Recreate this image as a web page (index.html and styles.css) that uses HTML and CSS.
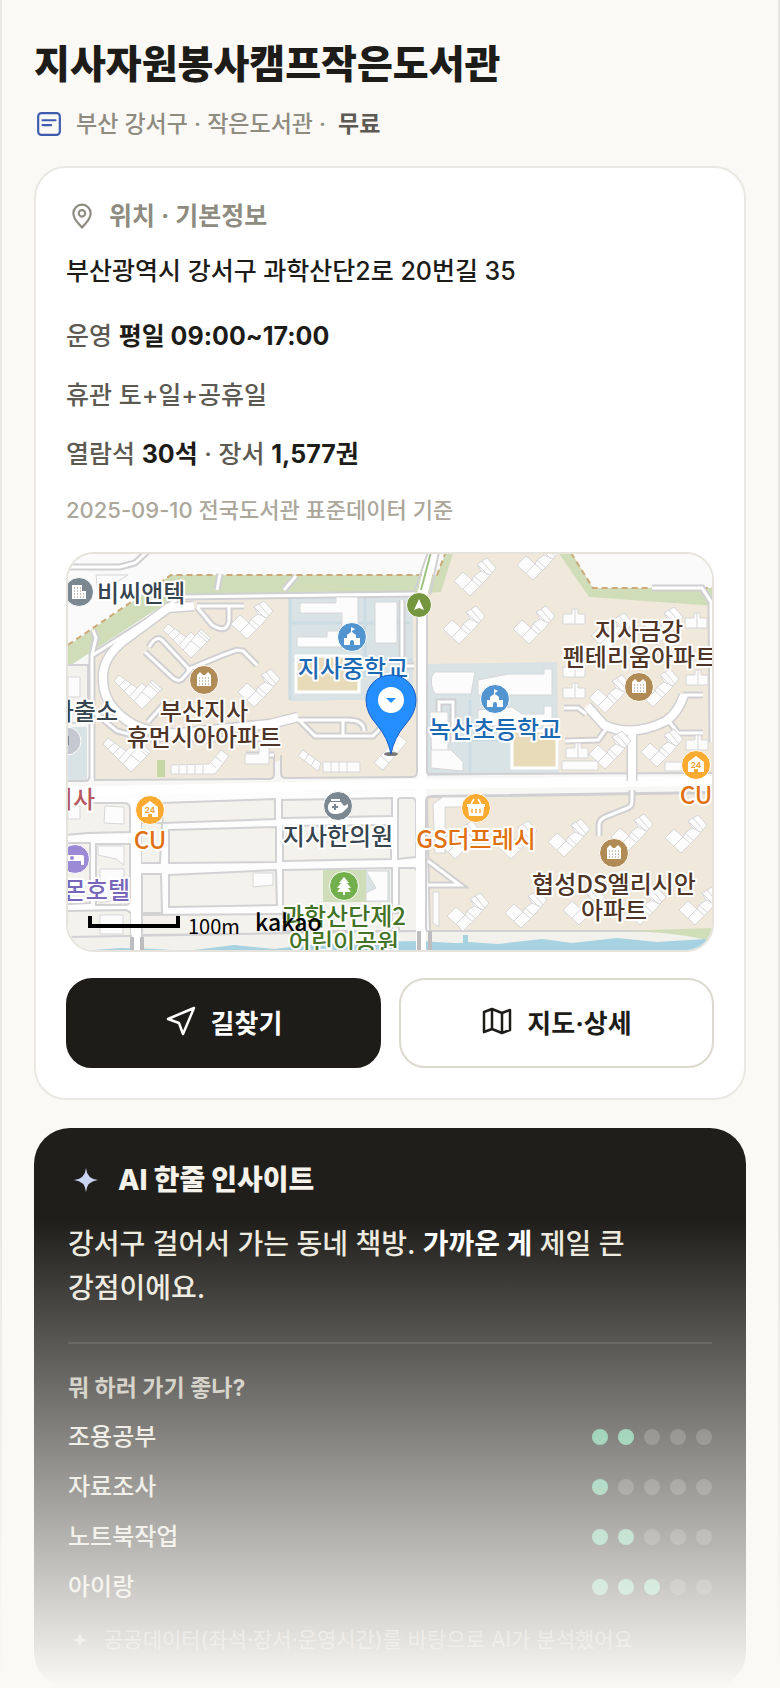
FILE: index.html
```html
<!DOCTYPE html>
<html lang="ko">
<head>
  <meta charset="UTF-8">
  <meta name="viewport" content="width=device-width, initial-scale=1.0">
  <title>지사자원봉사캠프작은도서관</title>
  <link rel="stylesheet" href="styles.css">
</head>
<body>
  <main class="page">
    <header class="place-header">
      <h1>지사자원봉사캠프작은도서관</h1>
      <p class="place-meta">
        <svg class="icon-type" viewBox="0 0 24 24" aria-hidden="true">
          <rect x="2" y="2" width="20" height="20" rx="3"/>
          <path d="M6 8.500h12M6 13h8"/>
        </svg>
        <span>부산 강서구 · 작은도서관 ·</span>
        <strong>무료</strong>
      </p>
    </header>

    <!-- 위치 · 기본정보 -->
    <section class="info-card">
      <h2 class="info-title">
        <svg class="icon-pin" viewBox="0 0 24 24" aria-hidden="true">
          <path d="M12 22.500C9 19.500 4 15 4 9.500a8 8 0 0 1 16 0c0 5.500-5 10-8 13z"/>
          <circle cx="12" cy="9.500" r="3"/>
        </svg>
        위치 · 기본정보
      </h2>
      <p class="address">부산광역시 강서구 과학산단2로 20번길 35</p>
      <div class="facts">
        <p>운영 <strong>평일 09:00~17:00</strong></p>
        <p>휴관 토+일+공휴일</p>
        <p>열람석 <strong>30석</strong> · 장서 <strong>1,577권</strong></p>
      </div>
      <p class="source">2025-09-10 전국도서관 표준데이터 기준</p>

      <div class="map">
        <svg viewBox="68 554 644 396" role="img" aria-label="지도">
          <defs>
            <g id="tower">
              <path d="M-12-5L-21 4-5 19 11 3 21-9 12-19 2-13 6-6-1-1-3 3z"/>
              <path d="M-12 12l9-9 8 7M-1-1l9 8M6-6l9 4M2-13l11 11M7-16l10 12"/>
            </g>
            <g id="row">
              <path d="M-19-17L-24-11 4 17 24-3 14-12 8-5 4-9-1-4z"/>
              <path d="M-13-12l-6 6M-7-8l-7 7M-1-4l-8 9M8-5L-4 9M10-8l10 9M4 0l10 8M12-10l10 9"/>
            </g>
            <g id="twin"><path d="M-11-4h9v-5h6v5h7v10h-22zM1-9V6"/></g>
            <g id="apartment">
              <circle r="14.500" class="badge brown"/>
              <path class="glyph" d="M-7 6V-5l3-3 3 3h2l3-3 3 3V6z"/>
              <path class="windows" d="M-5-2h11M-5 1h11M-5 4h11"/>
            </g>
            <g id="school">
              <circle r="14.500" class="badge blue"/>
              <path class="glyph" d="M-8 8V1h3v-3l4-3v-5l4 2-3 2v1l4 3v3h4v7H2V5a2 2 0 0 0-4 0v3z"/>
            </g>
            <g id="cu">
              <circle r="14.500" class="badge orange"/>
              <path class="glyph" d="M-8 7V-3l8-6 8 6V7H2V4h-4v3z"/>
              <text class="store-no" y="3">24</text>
            </g>
            <path id="lanes" d="M68 567h52l15-4 13-12M93 630l3 8-4 17v124M93 655l57-36 30-22 235-3M170 592v-10M217 590l3-16M284 590l12-14M197 606h47M197 607l15 18q15 9 17-4v-15M145 652l28 26q6 5 10 0l7-8-28-30q-6-5-13 7M187 670l36-15 14-5 6 1 14 14M148 722l16-18M95 713l22 18 30 8h133M298 720h50q16 0 16 11M298 719l17 17h58l8-8M343 720v16M402 600v66h12M439 720v-18h14v40M564 708h14l8 6M565 741l33-1 9-12M683 695h20M668 720l10 13h25M652 588h50l9 14 1 140M632 790v12q0 5-7 7l-20 8q-6 3-6 8v11M428 861l32 24h-32M246 755h28"/>
            <path id="roads" d="M194 606l-26 2-38 28q-26 18-27 39t12 35q22 25 65 23l90-9 28-7M587 706l17 19q28 13 62-4 12-8 18-26M632 731v50"/>
          </defs>

          <rect class="ground" x="68" y="554" width="644" height="396"/>
          <path class="empty" d="M68 554h377l-8 23H171L68 645zM571 554h141v34H593z"/>
          <path class="green" d="M68 646l103-71h266l9-23h8l-13 42H180l-112 73z"/>
          <path class="border-line" d="M68 645l103-70h266l8-21"/>

          <!-- 단지 -->
          <path class="estate" d="M94 779V654l88-60h234v180q0 3-3 3H286q-5 0-5-5V760l-8 3v12q0 3-4 3z"/>
          <path class="estate" d="M426 663v-70l15-1 13-42h104l31 47 125 8v168l-290 1z"/>
          <path class="green" d="M558 552l31 45 125 9v-18H593l-22-36z"/>
          <path class="border-line" d="M571 553l22 35h120"/>
          <path class="estate edged" d="M427 800q0-3 3-3l284-4v138l-284 1z"/>
          <path class="school" d="M289 592h124v107l-122 2zM427 664l130-2 2 112-132 2z"/>
          <path class="school-line" d="M290 623h120M290 596v104M365 597v80M293 660h120M470 700v72M430 740h80"/>
          <path class="field" d="M296 656h63v36h-63zM512 731h45v37h-45z"/>
          <path class="park" d="M157 760h8v17h-8z"/>
          <path class="school" d="M66 727h21v53H66z"/>

          <!-- 남쪽 블록 -->
          <path class="avenue" d="M66 792l350-8 300-3"/>
          <path class="south" d="M66 797l360-8v142l-360 7z"/>
          <path class="block" d="M66 665h22v58H66zM66 803h58q6 0 6 6v23l-42 1-22 2zM160 803l115-4v20l-112 4zM141 823h21l-2 40h-19zM169 830l107-3v35l-107 1zM169 875l107-5 1 35-108 2zM142 874h19l1 39h-20zM66 843h24v60l-24 1zM96 844h34v56q0 5-5 5H96zM66 911l60-1q5 2 5 5v22l-65 3zM142 915l276-2v19l-276 3z"/>
          <path class="block" d="M282 800l110-2v18l-110 2zM283 826l108-1v34l-108 2zM283 870l109-2v63H283zM398 800q0-2 4-2h10q4 0 4 6v53l-18 2zM399 868h14q4 0 4 4v59h-18z"/>
          <path class="green" d="M323 870h43v32h-43z"/>
          <path class="school" d="M366 870h24v32h-24z"/>

          <!-- 하천 -->
          <path class="riverside" d="M66 937l352-6h296v21H66z"/>
          <path class="green" d="M620 931l94-3v13q-45-10-94-10z"/>
          <path class="water" d="M66 952l55-4 35 1 30 2 48-6 40 4 50-6 94-2 36 2h9v-8h5v7l30 2 44-5 30 4 45-5 40 4 48-3 18 8 9 4z"/>

          <!-- 도로 -->
          <path class="avenue" d="M421 594v360M136 800v154"/>
          <path class="avenue" d="M421 600l12-50"/>
          <path class="road-edge" d="M94 780l176-1q4-1 4-5v-20M281 755v18q0 5 5 5l126-1q5 0 5-5V594M427 600v170q0 5 5 4l280-1M426 930v-129q0-5 6-5l281-4M415 590l13-38M430 595l9-43M131 935v17M142 935v17M66 781h20q3 0 3-4"/>
          <path class="road-bold" d="M419 931v21M430 931v21M132 937v15M142 937v15"/>
          <path class="bus-line" d="M421 590l10-38"/>
          <use href="#lanes" class="lane-edge"/>
          <use href="#roads" class="wide-edge"/>
          <use href="#lanes" class="lane"/>
          <use href="#roads" class="wide"/>

          <!-- 건물 -->
          <g class="building">
            <use href="#row" x="187" y="641"/><use href="#row" x="138" y="692"/><use href="#row" x="127" y="755"/>
            <use href="#tower" x="252" y="620"/><use href="#tower" x="259" y="688"/>
            <use href="#tower" x="475" y="577"/><use href="#tower" x="464" y="625"/>
            <use href="#tower" x="538" y="561"/><use href="#tower" x="534" y="625"/>
            <use href="#tower" x="610" y="694"/><use href="#tower" x="658" y="688"/>
            <use href="#tower" x="610" y="750"/><use href="#tower" x="662" y="748"/>
            <use href="#tower" x="569" y="838"/><use href="#tower" x="632" y="833"/><use href="#tower" x="686" y="834"/>
            <use href="#tower" x="460" y="840"/><use href="#tower" x="516" y="840"/>
            <use href="#tower" x="468" y="912"/><use href="#tower" x="526" y="909"/>
            <use href="#tower" x="584" y="906"/><use href="#tower" x="645" y="906"/><use href="#tower" x="700" y="906"/>
            <use href="#tower" x="612" y="632"/><use href="#tower" x="662" y="626"/>
            <use href="#twin" x="574" y="618"/><use href="#twin" x="696" y="622"/>
            <use href="#twin" x="574" y="692"/><use href="#twin" x="697" y="679"/>
            <use href="#twin" x="577" y="752"/><use href="#twin" x="697" y="744"/>
            <use href="#twin" x="574" y="671"/>
            <path d="M300 603h36v-6h22v40h-16v-24h-42zM297 637h30v-6h22v16h-52zM375 602h22v41h-22zM432 676l3-4h40l-4 22h-36q-5-8-3-18zM430 712h18v50h-16zM96 575h32l-30 18zM68 677h12v20H68zM478 680l30-6h36v-5h8v26h-74zM478 710l34-3 10 7h22v-8h8v20h-74z"/>
            <path d="M562 761h36v9h-36zM665 762h34v9h-34zM431 750h20l12 12v9l-32-3z"/>
            <path d="M171 765l38-1 12-14 8 6-14 18h-44zM179 765v10M187 765v10M195 765v10M203 765v10M211 763l5 5M216 757l6 5M298 756l5-6 18 13-3 8zM304 761l5-7M311 766l4-7M323 762h37v10h-37zM331 762v10M339 762v10M347 762v10M374 763l25-28 8 7-24 28zM381 756l8 7M389 747l8 7"/>
            <path d="M105 806l19 1v17l-20-1zM68 806h12v13H68zM98 846h26v19l-8-6-18-4zM100 869h24v36l-10-5-14 3zM253 873h20v12l-20 2zM100 915h23v19h-23zM366 871h22v30h-22v-8l10-5zM433 804l10-7h28v10h-26v46h-10zM433 892h6v35l-6-4zM245 754h14v-8h10v18h-24z"/>
          </g>

          <g class="badges">
            <g transform="translate(79 592)">
              <circle r="14.500" class="badge slate"/>
              <path class="glyph" d="M-7 7V-7H3v6h4v8z"/>
              <path class="windows" d="M-5-4h8M-5-1h8M-5 2h11M-5 5h11"/>
            </g>
            <use href="#apartment" x="204" y="680"/>
            <use href="#apartment" x="639" y="687"/>
            <use href="#apartment" x="614" y="853"/>
            <use href="#school" x="352" y="637"/>
            <use href="#school" x="495" y="699"/>
            <use href="#cu" x="150" y="810"/>
            <use href="#cu" x="696" y="765"/>
            <g transform="translate(419 605)">
              <circle r="12.500" class="badge olive"/>
              <path class="glyph" d="M0-6l5 11-5-2-5 2z"/>
            </g>
            <circle cx="67" cy="741" r="14" class="badge pale"/>
            <path d="M67 736h2v9h-2z" fill="#7b8791"/>
            <g transform="translate(338 806)">
              <circle r="14.500" class="badge slate"/>
              <path class="glyph" d="M-7-7h9v2h-9zM-8-4H3l3 4 4-2v3L5 6q-3 2-9 2-6-1-6-6 0-4 2-6z"/>
              <path d="M-3-2v6M-6 1h6" stroke="#7b8791" stroke-width="2"/>
            </g>
            <g transform="translate(476 808)">
              <circle r="14.500" class="badge orange"/>
              <path class="glyph" d="M-9-4H9v3H8L7 8H-7L-8-1h-1z"/>
              <path d="M-5-4l3-5M5-4l-3-5" stroke="#fff" stroke-width="1.500"/>
              <path d="M-4 1v4M0 1v4M4 1v4" stroke="#fbab32" stroke-width="1.500"/>
            </g>
            <g transform="translate(75 859)">
              <circle r="14.500" class="badge violet"/>
              <path class="glyph" d="M-10-4h17q2 0 2 2v8H6V2h-16z"/>
              <circle cx="-3" cy="-1" r="2" fill="#9b8ad6"/>
            </g>
            <g transform="translate(344 886)">
              <circle r="14.500" class="badge leaf"/>
              <path class="glyph" d="M0-9l5 6H3l4 5H4l3 4H1v3h-2V6h-6l3-4h-3l4-5h-2z"/>
            </g>
          </g>

          <g class="labels">
            <text x="97" y="602" class="start slate-text">비씨앤텍</text>
            <text x="118" y="720" class="end slate-text">파출소</text>
            <text x="204" y="720" class="brown-text">부산지사</text>
            <text x="204" y="746" class="brown-text">휴먼시아아파트</text>
            <text x="353" y="677" class="blue-text">지사중학교</text>
            <text x="495" y="738" class="blue-text">녹산초등학교</text>
            <text x="639" y="640" class="brown-text">지사금강</text>
            <text x="640" y="666" class="brown-text">펜테리움아파트</text>
            <text x="95" y="808" class="end red-text">지사</text>
            <text x="150" y="849" class="orange-text">CU</text>
            <text x="696" y="804" class="orange-text">CU</text>
            <text x="338" y="845" class="slate-text">지사한의원</text>
            <text x="476" y="848" class="orange-text">GS더프레시</text>
            <text x="130" y="899" class="end violet-text">레몬호텔</text>
            <text x="614" y="893" class="brown-text">협성DS엘리시안</text>
            <text x="614" y="919" class="brown-text">아파트</text>
            <text x="344" y="925" class="green-text">과학산단제2</text>
            <text x="344" y="951" class="green-text">어린이공원</text>
          </g>

          <!-- 현재 위치 핀 -->
          <ellipse cx="391" cy="754" rx="7" ry="2" fill="#777"/>
          <path class="pin" d="M391 754q-3-16-14-29-11-12-11-25a25 25 0 0 1 50 0q0 13-11 25-11 13-14 29z"/>
          <circle cx="391" cy="700" r="13" fill="#fff"/>
          <path d="M386 698h10l-5 5z" fill="#258eff"/>

          <!-- 축척 -->
          <path class="scale-bar" d="M90 916v10h88v-10"/>
          <text x="188" y="934" class="scale-text">100m</text>
          <text x="255" y="931" class="brand-text">kakao</text>
        </svg>
      </div>

      <div class="actions">
        <button type="button" class="btn btn-dark">
          <svg viewBox="0 0 32 32" aria-hidden="true"><path d="M29 3L3 14l11 4 4 11z"/></svg>
          길찾기
        </button>
        <button type="button" class="btn btn-light">
          <svg viewBox="0 0 32 32" aria-hidden="true"><path d="M3 7l8-3 10 4 8-3v20l-8 3-10-4-8 3zM11 4v20M21 8v20"/></svg>
          지도·상세
        </button>
      </div>
    </section>

    <!-- AI 인사이트 -->
    <section class="insight-card">
      <h2 class="insight-title">
        <svg class="icon-spark" viewBox="0 0 24 24" aria-hidden="true"><path d="M12 0q1 11 12 12-11 1-12 12-1-11-12-12 11-1 12-12z"/></svg>
        AI 한줄 인사이트
      </h2>
      <p class="insight-text">강서구 걸어서 가는 동네 책방. <strong>가까운 게</strong> 제일 큰 강점이에요.</p>
      <h3>뭐 하러 가기 좋나?</h3>
      <ul class="scores">
        <li><span>조용공부</span><span class="dots"><i class="on"></i><i class="on"></i><i></i><i></i><i></i></span></li>
        <li><span>자료조사</span><span class="dots"><i class="on"></i><i></i><i></i><i></i><i></i></span></li>
        <li><span>노트북작업</span><span class="dots"><i class="on"></i><i class="on"></i><i></i><i></i><i></i></span></li>
        <li><span>아이랑</span><span class="dots"><i class="on"></i><i class="on"></i><i class="on"></i><i></i><i></i></span></li>
      </ul>
      <p class="insight-note">
        <svg viewBox="0 0 24 24" aria-hidden="true"><path d="M12 0q1 11 12 12-11 1-12 12-1-11-12-12 11-1 12-12z"/></svg>
        공공데이터(좌석·장서·운영시간)를 바탕으로 AI가 분석했어요
      </p>
    </section>
    <div class="fade"></div>
  </main>
</body>
</html>
```
FILE: styles.css
```css
* {
  box-sizing: border-box;
  margin: 0;
  padding: 0;
}

body {
  font-family: Inter, "Noto Sans CJK KR", sans-serif;
  font-size: 25px;
  font-weight: 500;
  word-break: keep-all;
  background: #faf9f5;
  color: #1d1c18;
}

.page {
  position: relative;
  padding: 38px 32px 0;
  border: solid #e9e8e2;
  border-width: 0 2px;
}

/* header */
h1 {
  font-size: 39px;
  line-height: 52px;
  font-weight: 800;
}

.place-meta {
  display: flex;
  align-items: center;
  margin: 16px 0 24px;
  font-size: 23px;
  line-height: 36px;
  color: #8e8b80;
}

.place-meta strong {
  margin-left: 12px;
  color: #5c5a52;
}

.icon-type {
  width: 26px;
  height: 26px;
  margin: 0 14px 0 2px;
  fill: none;
  stroke: #3f5bb0;
  stroke-width: 2;
  stroke-linecap: round;
}

/* info card */
.info-card {
  padding: 30px;
  background: #fff;
  border: 2px solid #e9e8e2;
  border-radius: 32px;
}

.info-title {
  display: flex;
  align-items: center;
  gap: 14px;
  font-size: 25px;
  line-height: 36px;
  color: #8e8b80;
}

.icon-pin {
  width: 26px;
  height: 26px;
  margin-left: 3px;
  fill: none;
  stroke: #8e8b80;
  stroke-width: 2;
}

.address {
  margin: 17px 0 25px;
  line-height: 40px;
}

.facts {
  display: flex;
  flex-direction: column;
  gap: 19px;
  line-height: 40px;
  color: #5c5a52;
}

.facts strong {
  color: #1d1c18;
}

.source {
  margin: 20px 0 26px;
  font-size: 22px;
  line-height: 32px;
  color: #aba79b;
}

/* map */
.map {
  overflow: hidden;
  border: 2px solid #e6e3dc;
  border-radius: 28px;
}

.map svg {
  display: block;
  width: 100%;
  height: auto;
}

.ground { fill: #f7f7f5; }
.empty { fill: #fafafa; }
.green { fill: #d0ddb9; }
.park { fill: #c5d7a4; }
.estate { fill: #f0e8da; }
.edged { stroke: #d0d0d2; stroke-width: 2; }
.school { fill: #d9e3e6; }
.field { fill: #e7dbb9; stroke: #fff; stroke-width: 3; }
.south { fill: #fdfdfd; }
.block { fill: #f4f2ed; stroke: #d2d2d4; stroke-width: 2; }
.riverside { fill: #f2f1eb; stroke: #d2d2d4; stroke-width: 2; }
.water { fill: #a6d2e2; }
.pin { fill: #258eff; stroke: #1a5fc8; stroke-width: 1; }

.border-line,
.school-line,
.avenue,
.road-edge,
.road-bold,
.bus-line,
.lane-edge,
.lane,
.wide-edge,
.wide,
.scale-bar {
  fill: none;
}

.border-line { stroke: #cda977; stroke-width: 2; stroke-dasharray: 6 4; }
.school-line { stroke: #cbdbe2; stroke-width: 3; }
.avenue { stroke: #fff; stroke-width: 10; }
.road-edge { stroke: #d0d0d3; stroke-width: 2; }
.road-bold { stroke: #bdbdc0; stroke-width: 4; }
.bus-line { stroke: #9dc283; stroke-width: 2; }
.lane-edge { stroke: #d0d0d3; stroke-width: 7; }
.lane { stroke: #fff; stroke-width: 3; }
.wide-edge { stroke: #d0d0d3; stroke-width: 11; }
.wide { stroke: #fff; stroke-width: 8; }
.scale-bar { stroke: #000; stroke-width: 4; }

.building {
  fill: #fcfcfc;
  stroke: #d6d6d8;
  stroke-width: 1;
}

.badge { stroke: #fff; stroke-width: 1; }
.brown { fill: #b08b55; }
.blue { fill: #5294cf; }
.orange { fill: #fbab32; }
.slate { fill: #7b8791; }
.pale { fill: #c5c8d0; }
.olive { fill: #73963f; }
.violet { fill: #9b8ad6; }
.leaf { fill: #72b04d; }
.glyph { fill: #fff; }

.windows {
  fill: none;
  stroke: #97826a;
  stroke-width: 1;
  stroke-dasharray: 1 2;
}

.store-no {
  fill: #f0a030;
  font-size: 8px;
  font-weight: 700;
  text-anchor: middle;
}

.labels {
  font-family: "Noto Sans CJK KR", sans-serif;
  font-size: 24px;
  text-anchor: middle;
  paint-order: stroke;
  stroke: #fff;
  stroke-width: 4px;
  stroke-linejoin: round;
}

.start { text-anchor: start; }
.end { text-anchor: end; }
.slate-text { fill: #37454f; }
.brown-text { fill: #4f3527; }
.blue-text { fill: #1c69b3; }
.red-text { fill: #b4575e; }
.orange-text { fill: #e07010; }
.violet-text { fill: #7866ba; }
.green-text { fill: #437326; }

.scale-text {
  font-family: "Noto Sans CJK KR", sans-serif;
  font-size: 20px;
  font-weight: 400;
}

.brand-text {
  font-family: "Noto Sans CJK KR", sans-serif;
  font-size: 23px;
}

/* buttons */
.actions {
  display: flex;
  gap: 18px;
  margin-top: 26px;
}

.btn {
  flex: 1;
  display: flex;
  align-items: center;
  justify-content: center;
  gap: 14px;
  height: 90px;
  padding-bottom: 4px;
  border: 2px solid #dcd9d0;
  border-radius: 26px;
  font-family: inherit;
  font-size: 26px;
  font-weight: 700;
  cursor: pointer;
}

.btn svg {
  width: 32px;
  height: 32px;
  fill: none;
  stroke: currentColor;
  stroke-width: 2.500;
  stroke-linejoin: round;
}

.btn-dark {
  background: #1d1c18;
  border-color: #1d1c18;
  color: #fff;
}

.btn-light {
  background: #fff;
  color: #1d1c18;
}

/* insight card */
.insight-card {
  margin-top: 28px;
  padding: 32px 34px 30px;
  background: #1f1e1a;
  border-radius: 36px;
}

.insight-title {
  display: flex;
  align-items: center;
  gap: 20px;
  font-size: 28px;
  line-height: 40px;
  font-weight: 800;
  color: #f4f2ea;
}

.icon-spark {
  width: 24px;
  height: 24px;
  margin-left: 6px;
  fill: #c9d4f2;
}

.insight-text {
  margin-top: 22px;
  padding-bottom: 32px;
  border-bottom: 2px solid rgba(255, 255, 255, 0.1);
  font-size: 28px;
  line-height: 44px;
  color: #ece9df;
}

.insight-text strong {
  color: #fff;
}

h3 {
  margin-top: 28px;
  font-size: 23px;
  line-height: 32px;
  color: #c3bfb3;
}

.scores {
  margin-top: 8px;
  list-style: none;
}

.scores li {
  display: flex;
  align-items: center;
  justify-content: space-between;
  font-size: 24px;
  line-height: 50px;
  color: #e6e3da;
}

.dots {
  display: flex;
  gap: 10px;
}

.dots i {
  width: 16px;
  height: 16px;
  border-radius: 50%;
  background: rgba(255, 255, 255, 0.18);
}

.dots .on {
  background: #5cb78c;
}

.insight-note {
  display: flex;
  align-items: center;
  gap: 16px;
  margin-top: 10px;
  font-size: 21px;
  line-height: 36px;
  font-weight: 400;
  color: #8b8981;
}

.insight-note svg {
  width: 16px;
  height: 16px;
  margin-left: 4px;
  fill: #a4a8b4;
}

.fade {
  position: absolute;
  right: -2px;
  bottom: 0;
  left: -2px;
  height: 468px;
  background: linear-gradient(rgba(250, 249, 245, 0), #faf9f5);
  pointer-events: none;
}
```
